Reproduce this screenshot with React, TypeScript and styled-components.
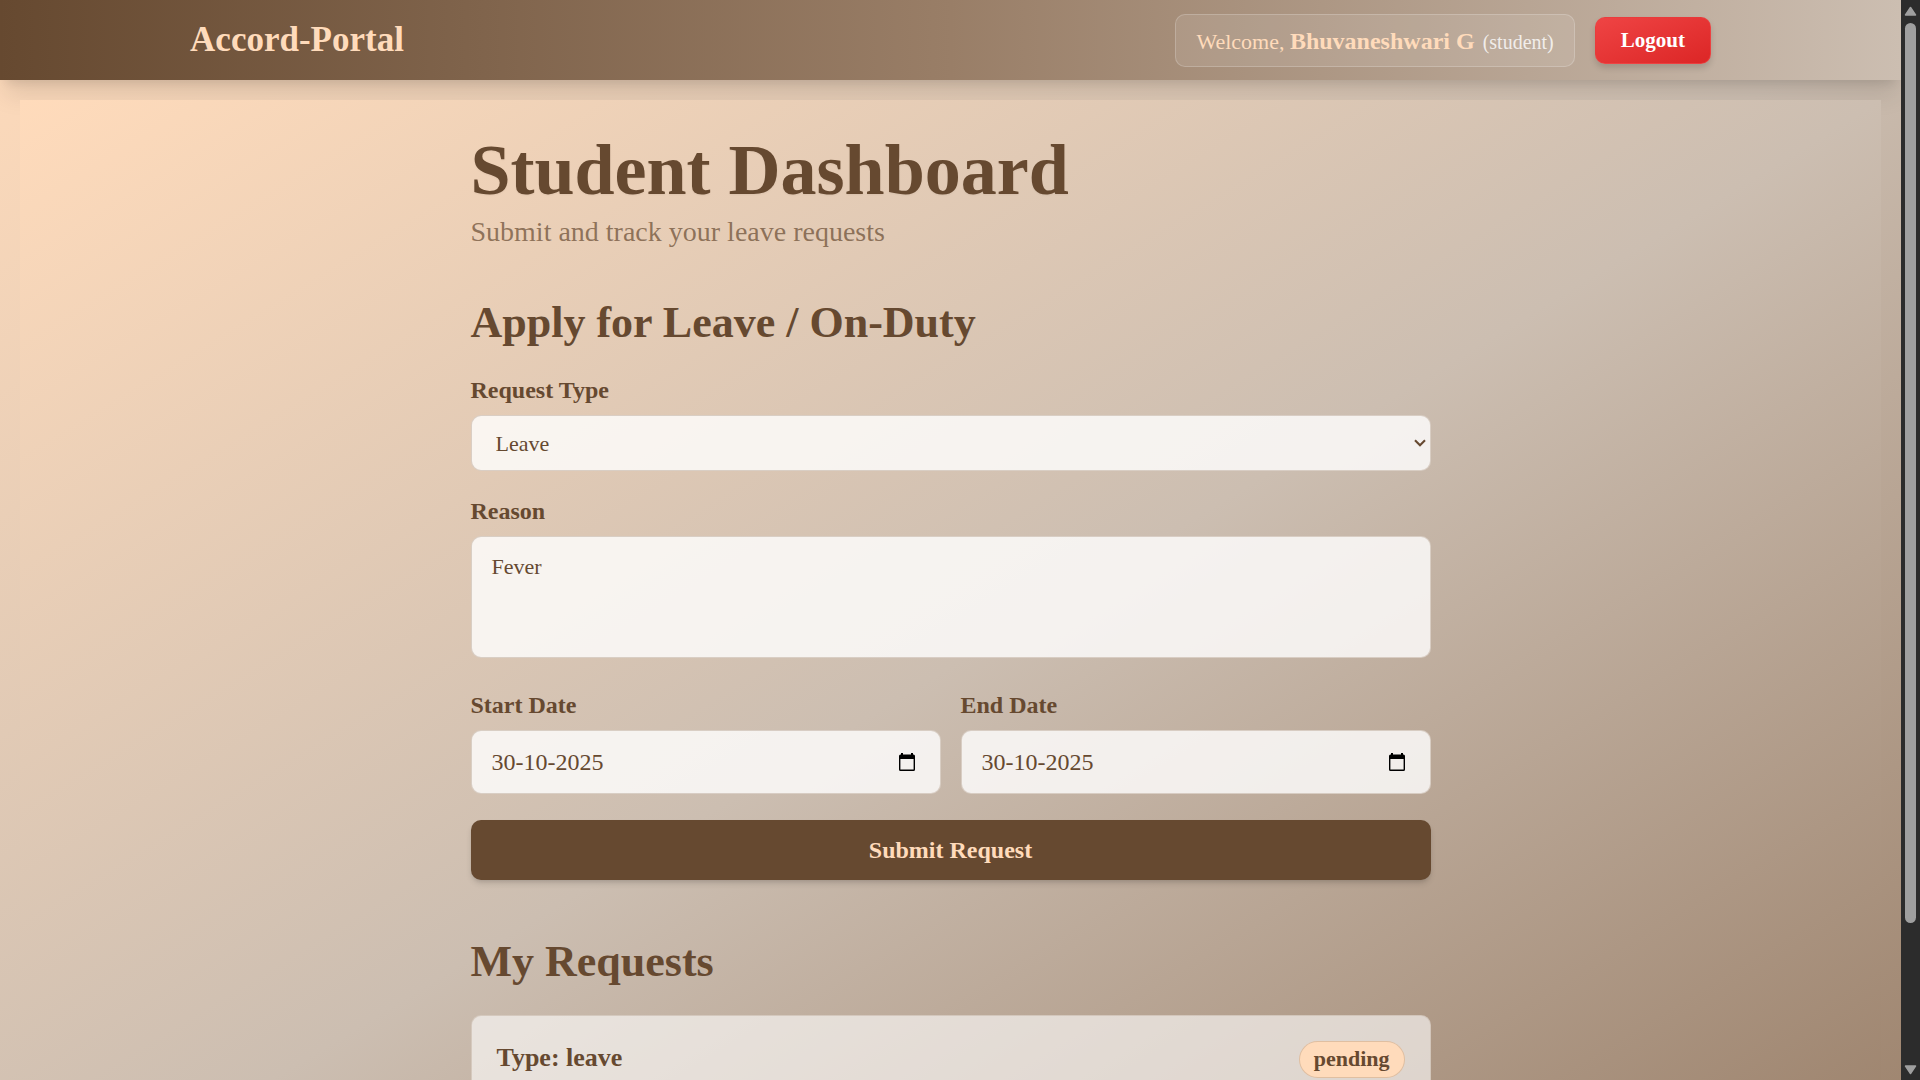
import React, { useState } from "react";
import styled, { createGlobalStyle } from "styled-components";

const serif = `Georgia, "Liberation Serif", serif`;
const brown = "#664930";
const tan = "#997e67";
const sand = "#ccbeb1";
const peach = "#ffdbbb";

const GlobalStyle = createGlobalStyle`
  *, *::before, *::after { box-sizing: border-box; }
  body { margin: 0; font-family: ${serif}; color: ${brown}; }
  button, input, select, textarea { font: inherit; color: inherit; }
  h1, h2, h3, p { margin: 0; }
`;

const Shell = styled.div`
  display: grid;
  grid-template-columns: minmax(0, 1fr) 19px;
  height: 100vh;
`;

const Viewport = styled.div`
  overflow-y: auto;
  scrollbar-width: none;
`;

const Page = styled.div`
  min-height: 100%;
  background: linear-gradient(to bottom right, ${peach}, ${sand}, ${tan});
`;

const Header = styled.header`
  display: flex;
  align-items: center;
  justify-content: space-between;
  height: 80px;
  padding: 0 10%;
  background: linear-gradient(to right, ${brown}, ${tan}, ${sand});
  box-shadow: 0 20px 25px -5px rgba(0, 0, 0, 0.1), 0 8px 10px -6px rgba(0, 0, 0, 0.1);
`;

const Brand = styled.a`
  color: ${peach};
  font-size: 35px;
  font-weight: 700;
  line-height: 36px;
  text-decoration: none;
`;

const Account = styled.div`
  display: flex;
  align-items: center;
  gap: 20px;
`;

const Welcome = styled.div`
  height: 53px;
  padding: 0 20px;
  border: 1px solid rgba(255, 255, 255, 0.2);
  border-radius: 10px;
  background: rgba(255, 255, 255, 0.1);
  color: ${peach};
  font-size: 22px;
  line-height: 52px;
  white-space: nowrap;
`;

const UserName = styled.strong`
  font-size: 24px;
`;

const Role = styled.span`
  margin-left: 8px;
  color: rgba(255, 255, 255, 0.8);
  font-size: 20px;
`;

const Logout = styled.button`
  height: 47px;
  padding: 0 25px;
  border: 1px solid rgba(239, 68, 68, 0.6);
  border-radius: 10px;
  background: linear-gradient(to bottom right, #ef4444, #dc2626);
  box-shadow: 0 4px 6px rgba(0, 0, 0, 0.15);
  color: #fff;
  font-size: 21px;
  font-weight: 700;
  cursor: pointer;
`;

const Gutter = styled.div`
  padding: 20px;
`;

const Main = styled.main`
  padding: 32px 20px;
  background: linear-gradient(to bottom right, ${peach}, ${sand}, ${tan});
`;

const Content = styled.div`
  max-width: 960px;
  margin: 0 auto;
`;

const Title = styled.h1`
  font-size: 72px;
  line-height: 76px;
  text-shadow: 0 1px 2px rgba(0, 0, 0, 0.05);
`;

const Subtitle = styled.p`
  margin-top: 8px;
  color: rgba(102, 73, 48, 0.7);
  font-size: 28px;
  line-height: 32px;
`;

const Section = styled.section<{ $top: number }>`
  margin-top: ${(p) => p.$top}px;
`;

const SectionTitle = styled.h2`
  margin-bottom: 26px;
  font-size: 44px;
  line-height: 54px;
`;

const Form = styled.form`
  display: flex;
  flex-direction: column;
  gap: 26px;
`;

const Field = styled.div<{ $extra?: number }>`
  display: flex;
  flex-direction: column;
  gap: 11px;
  padding-bottom: ${(p) => p.$extra ?? 0}px;
`;

const Label = styled.label`
  font-size: 24px;
  font-weight: 700;
  line-height: 28px;
`;

const boxed = `
  width: 100%;
  border: 1px solid rgba(204, 190, 177, 0.7);
  border-radius: 10px;
  background-color: rgba(255, 255, 255, 0.8);
  font-size: 22px;
  outline: none;
`;

const SelectWrap = styled.div`
  position: relative;

  svg {
    position: absolute;
    top: 24px;
    right: 5px;
    pointer-events: none;
  }
`;

const Select = styled.select`
  ${boxed}
  display: block;
  height: 56px;
  padding: 0 24px;
  appearance: none;
`;

const TextArea = styled.textarea`
  ${boxed}
  display: block;
  height: 122px;
  padding: 16px 20px;
  line-height: 28px;
  resize: none;
`;

const DateRow = styled.div`
  display: grid;
  grid-template-columns: 1fr 1fr;
  gap: 20px;
`;

const DateBox = styled.div`
  ${boxed}
  display: flex;
  align-items: center;
  height: 64px;
  padding: 0 20px;
`;

const DateInput = styled.input`
  flex: 1;
  min-width: 0;
  padding: 0;
  border: 0;
  outline: none;
  background: none;
  font-size: 24px;
`;

const PickerButton = styled.button`
  display: flex;
  padding: 2px 4px;
  border: 0;
  background: none;
  color: #000;
  cursor: pointer;
`;

const Submit = styled.button`
  height: 60px;
  border: 0;
  border-radius: 10px;
  background: ${brown};
  box-shadow: 0 4px 6px -1px rgba(0, 0, 0, 0.15), 0 2px 4px -2px rgba(0, 0, 0, 0.1);
  color: ${peach};
  font-size: 24px;
  font-weight: 700;
  cursor: pointer;
`;

const Card = styled.article`
  min-height: 185px;
  padding: 25px;
  border: 1px solid rgba(204, 190, 177, 0.7);
  border-radius: 10px;
  background: rgba(255, 255, 255, 0.6);
`;

const CardHead = styled.div`
  display: flex;
  align-items: flex-start;
  justify-content: space-between;
`;

const CardTitle = styled.h3`
  font-size: 26px;
  line-height: 34px;
`;

const Status = styled.span`
  height: 37px;
  padding: 0 14px;
  border: 1px solid rgba(153, 126, 103, 0.3);
  border-radius: 20px;
  background: ${peach};
  font-size: 22px;
  font-weight: 700;
  line-height: 34px;
`;

const Scrollbar = styled.div`
  display: flex;
  flex-direction: column;
  align-items: center;
  padding: 6px 0 5px;
  background: #2c2c2c;
`;

const Track = styled.div`
  flex: 1;
  width: 11px;
  padding: 7px 0;
`;

const Thumb = styled.div`
  height: 87%;
  border-radius: 6px;
  background: #9f9f9f;
`;

const Arrow = ({ down = false }: { down?: boolean }) => (
  <svg width="13" height="10" viewBox="0 0 13 10" aria-hidden="true">
    <path
      d={down ? "M1.5 1h10L6.5 8.5z" : "M1.5 9h10L6.5 1.5z"}
      fill="#9f9f9f"
      stroke="#9f9f9f"
      strokeWidth="1.5"
      strokeLinejoin="round"
    />
  </svg>
);

const Chevron = () => (
  <svg width="12" height="8" viewBox="0 0 12 8" aria-hidden="true">
    <path d="M1 1.200L6 6.200L11 1.200" fill="none" stroke={brown} strokeWidth="2.100" />
  </svg>
);

const CalendarIcon = () => (
  <svg width="18" height="20" viewBox="0 0 18 20" aria-hidden="true">
    <path
      d="M3 1h2v1.500h8V1h2v1.500h.5A1.500 1.500 0 0 1 17 4V17.500A1.500 1.500 0 0 1 15.500 19h-13A1.500 1.500 0 0 1 1 17.500V4A1.500 1.500 0 0 1 2.500 2.500H3zM2.400 7v10.600h13.200V7z"
      fill="currentColor"
      fillRule="evenodd"
    />
  </svg>
);

function DateField({ id, label }: { id: string; label: string }) {
  const [value, setValue] = useState("30-10-2025");
  return (
    <Field>
      <Label htmlFor={id}>{label}</Label>
      <DateBox>
        <DateInput id={id} type="text" value={value} onChange={(e) => setValue(e.target.value)} />
        <PickerButton type="button" aria-label={`Pick ${label}`}>
          <CalendarIcon />
        </PickerButton>
      </DateBox>
    </Field>
  );
}

export default function App() {
  return (
    <>
      <GlobalStyle />
      <Shell>
        <Viewport>
          <Page>
            <Header>
              <Brand href="#">Accord-Portal</Brand>
              <Account>
                <Welcome>
                  Welcome, <UserName>Bhuvaneshwari G</UserName>
                  <Role>(student)</Role>
                </Welcome>
                <Logout type="button">Logout</Logout>
              </Account>
            </Header>
            <Gutter>
              <Main>
                <Content>
                  <Title>Student Dashboard</Title>
                  <Subtitle>Submit and track your leave requests</Subtitle>
                  <Section $top={48}>
                    <SectionTitle>Apply for Leave / On-Duty</SectionTitle>
                    <Form onSubmit={(e) => e.preventDefault()}>
                      <Field>
                        <Label htmlFor="type">Request Type</Label>
                        <SelectWrap>
                          <Select id="type" defaultValue="leave">
                            <option value="leave">Leave</option>
                            <option value="onduty">On-Duty</option>
                          </Select>
                          <Chevron />
                        </SelectWrap>
                      </Field>
                      <Field $extra={7}>
                        <Label htmlFor="reason">Reason</Label>
                        <TextArea id="reason" defaultValue="Fever" />
                      </Field>
                      <DateRow>
                        <DateField id="start" label="Start Date" />
                        <DateField id="end" label="End Date" />
                      </DateRow>
                      <Submit type="submit">Submit Request</Submit>
                    </Form>
                  </Section>
                  <Section $top={55}>
                    <SectionTitle>My Requests</SectionTitle>
                    <Card>
                      <CardHead>
                        <CardTitle>Type: leave</CardTitle>
                        <Status>pending</Status>
                      </CardHead>
                    </Card>
                  </Section>
                </Content>
              </Main>
            </Gutter>
          </Page>
        </Viewport>
        <Scrollbar aria-hidden="true">
          <Arrow />
          <Track>
            <Thumb />
          </Track>
          <Arrow down />
        </Scrollbar>
      </Shell>
    </>
  );
}
